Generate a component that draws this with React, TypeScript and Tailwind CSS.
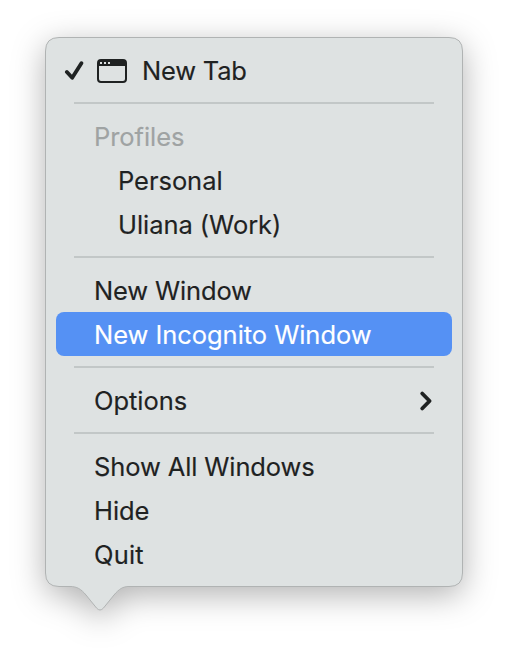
import React from 'react';

interface MenuItemProps {
    label: string;
    className?: string;
    active?: boolean;
    muted?: boolean;
    children?: React.ReactNode;
}

function MenuItem({ label, className = 'pl-[38px]', active = false, muted = false, children }: MenuItemProps) {
    const color = active ? 'bg-[#5591f4] text-white' : muted ? 'text-[#9fa3a3]' : 'text-[#1f2222]';

    return (
        <li role="menuitem" className={`flex h-11 items-center rounded-[8px] whitespace-nowrap ${color} ${className}`}>
            <span className="pt-0.5">{label}</span>
            {children}
        </li>
    );
}

function Separator() {
    return <li role="separator" className="mx-[18px] my-[10px] h-0.5 bg-[#c2c7c7]" />;
}

function Bubble() {
    return (
        <svg className="absolute inset-0 overflow-visible drop-shadow-[0_8px_16px_rgba(0,0,0,0.3)]" width="418" height="574" viewBox="0 0 418 574" fill="none">
            <path
                d="M14 .5H404Q417.500 .5 417.500 14V536Q417.500 549.500 404 549.500H84C78 549.500 74 552 69 558L58.500 571Q55 575 51.500 571L41 558C36 552 32 549.500 25 549.500H14Q.5 549.500 .5 536V14Q.5 .5 14 .5Z"
                fill="#dee2e2"
                stroke="#b0b3b3"
            />
        </svg>
    );
}

export default function App() {
    return (
        <div className="h-[668px] w-[508px] overflow-hidden bg-white pt-[37px] pl-[45px] font-['Inter',sans-serif] text-[25.500px] leading-[44px] tracking-[-0.05px] [-webkit-text-stroke:0.15px_currentColor]">
            <div className="relative w-[418px]">
                <Bubble />
                <ul role="menu" className="relative p-[11px]">
                    <li role="menuitem" className="flex h-11 items-center pl-[8px] text-[#1f2222]">
                        <svg width="20" height="22" viewBox="0 0 20 22" fill="none" stroke="currentColor" strokeWidth="3.800" strokeLinecap="round" strokeLinejoin="round">
                            <path d="M2.900 13 8.200 18.800 17.400 4.200" />
                        </svg>
                        <svg className="mt-0.5 ml-[13px]" width="30" height="24" viewBox="0 0 30 24">
                            <rect x="1" y="1" width="28" height="22" rx="3" fill="none" stroke="currentColor" strokeWidth="2" />
                            <path d="M1 7V4Q1 1 4 1H26Q29 1 29 4V7Z" fill="currentColor" />
                            <path d="M3 3h2v2H3zM7 3h2v2H7zM11 3h2v2h-2z" fill="#dee2e2" />
                        </svg>
                        <span className="ml-[15px] pt-0.5 tracking-[-0.2px]">New Tab</span>
                    </li>
                    <Separator />
                    <MenuItem label="Profiles" muted />
                    <MenuItem label="Personal" className="pl-[62px]" />
                    <MenuItem label="Uliana (Work)" className="pl-[62px]" />
                    <Separator />
                    <MenuItem label="New Window" className="pl-[38px] tracking-[-0.15px]" />
                    <MenuItem label="New Incognito Window" active />
                    <Separator />
                    <MenuItem label="Options">
                        <svg className="mt-0.5 mr-[19.500px] ml-auto" width="14" height="22" viewBox="0 0 14 22" fill="none" stroke="currentColor" strokeWidth="3.800" strokeLinecap="round" strokeLinejoin="round">
                            <path d="M3.200 3.500 10.600 11 3.200 18.500" />
                        </svg>
                    </MenuItem>
                    <Separator />
                    <MenuItem label="Show All Windows" className="pl-[38px] tracking-[-0.12px]" />
                    <MenuItem label="Hide" />
                    <MenuItem label="Quit" className="pl-[38px] tracking-[0.15px]" />
                </ul>
            </div>
        </div>
    );
}
